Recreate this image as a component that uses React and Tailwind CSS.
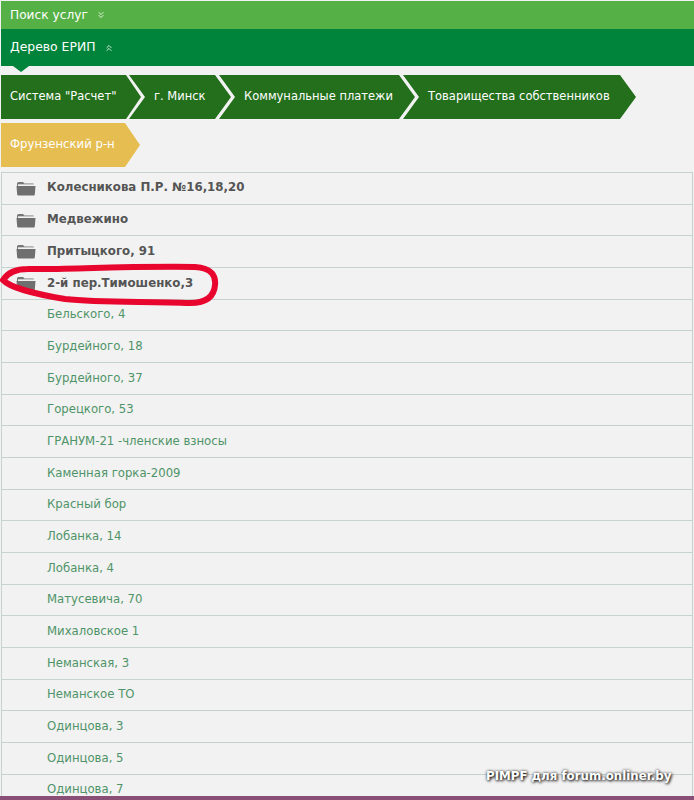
import { ChevronsDown, ChevronsUp } from 'lucide-react'

const CRUMBS = [
  { label: 'Система "Расчет"', width: 'w-[140px]', first: true },
  { label: 'г. Минск', width: 'w-[102px]' },
  { label: 'Коммунальные платежи', width: 'w-[196px]' },
  { label: 'Товарищества собственников', width: 'w-[233px]' },
]

const FOLDERS = ['Колесникова П.Р. №16,18,20', 'Медвежино', 'Притыцкого, 91', '2-й пер.Тимошенко,3']

const ITEMS = [
  'Бельского, 4',
  'Бурдейного, 18',
  'Бурдейного, 37',
  'Горецкого, 53',
  'ГРАНУМ-21 -членские взносы',
  'Каменная горка-2009',
  'Красный бор',
  'Лобанка, 14',
  'Лобанка, 4',
  'Матусевича, 70',
  'Михаловское 1',
  'Неманская, 3',
  'Неманское ТО',
  'Одинцова, 3',
  'Одинцова, 5',
  'Одинцова, 7',
]

function FolderIcon() {
  return (
    <svg width="20" height="15" viewBox="0 0 20 15" className="shrink-0">
      <path d="M1 2.5 Q1 1 2.5 1 H7 L8.5 2.5 H17 Q18 2.5 18 3.5 V4 H2 V5 H1 Z" fill="#777" />
      <path d="M2 3.5 H18" stroke="#ddd" strokeWidth="0.8" />
      <path d="M0.5 5 H19.5 L18.8 13.5 Q18.7 14.5 17.7 14.5 H2.3 Q1.3 14.5 1.2 13.5 Z" fill="#6f6f6f" />
    </svg>
  )
}

function Row({ children }) {
  return <div className="flex h-[31.68px] shrink-0 items-center border-b border-[#c5d3cf]">{children}</div>
}

export default function App() {
  return (
    <div className="relative h-[800px] w-[694px] overflow-hidden bg-[#f2f2f2] pl-px pt-px font-['DejaVu_Sans',sans-serif] text-[11.5px]">
      <div className="flex h-[28px] items-center gap-[8px] bg-[#55b045] pl-[9px] text-[12.2px] text-white">
        Поиск услуг
        <ChevronsDown size={10} strokeWidth={2} />
      </div>
      <div className="relative flex h-[37px] items-center gap-[8px] bg-[#00833a] pl-[9px] text-[12.4px] text-white">
        Дерево ЕРИП
        <ChevronsUp size={10} strokeWidth={2} />
        <div className="absolute left-[12px] top-full h-0 w-0 border-x-[8px] border-t-[6px] border-x-transparent border-t-[#00833a]" />
      </div>

      <div className="mt-[9px] flex h-[44px]">
        {CRUMBS.map((c) => (
          <div
            key={c.label}
            className={
              c.first
                ? `${c.width} flex shrink-0 items-center whitespace-nowrap bg-[#246f1c] pl-[9px] text-white [clip-path:polygon(0_0,calc(100%-15px)_0,100%_50%,calc(100%-15px)_100%,0_100%)]`
                : `${c.width} -ml-[12px] flex shrink-0 items-center whitespace-nowrap bg-[#246f1c] pl-[25px] text-white [clip-path:polygon(0_0,calc(100%-16px)_0,100%_50%,calc(100%-16px)_100%,0_100%,16px_50%)]`
            }
          >
            {c.label}
          </div>
        ))}
      </div>

      <div className="mt-[4px] flex h-[44px] w-[139px] items-center whitespace-nowrap bg-[#e6bd50] pl-[9px] text-[11.7px] text-white [clip-path:polygon(0_0,calc(100%-15px)_0,100%_50%,calc(100%-15px)_100%,0_100%)]">
        Фрунзенский р-н
      </div>

      <div className="mt-[5px] mr-px flex flex-col border-x border-t border-[#c5d3cf]">
        {FOLDERS.map((name) => (
          <Row key={name}>
            <div className="ml-[14px] flex items-center gap-[11px] text-[11.8px] font-bold text-[#555]">
              <FolderIcon />
              {name}
            </div>
          </Row>
        ))}
        {ITEMS.map((name) => (
          <Row key={name}>
            <span className="ml-[45px] text-[11.7px] text-[#4f9468]">{name}</span>
          </Row>
        ))}
      </div>

      {/* hand drawn marker ring from the original screenshot */}
      <svg className="pointer-events-none absolute left-0 top-[260px]" width="230" height="50" viewBox="0 0 230 50">
        <path
          d="M28 9 C60 10 120 6 195 7 C212 8 216 16 215 25 C214 38 205 43 190 43 C150 41 100 43 65 39 C40 35 10 28 3 20 C8 12 18 9 28 9"
          fill="none"
          stroke="#e8062f"
          strokeWidth="6"
          strokeLinecap="round"
        />
      </svg>

      <div className="absolute left-[486px] top-[768px] text-[11.8px] font-bold text-white [text-shadow:1px_1px_3px_#000,0_0_3px_#555]">
        PIMPF для forum.onliner.by
      </div>
      <div className="absolute inset-x-0 bottom-0 h-[4px] bg-[#8a4f76]" />
    </div>
  )
}
